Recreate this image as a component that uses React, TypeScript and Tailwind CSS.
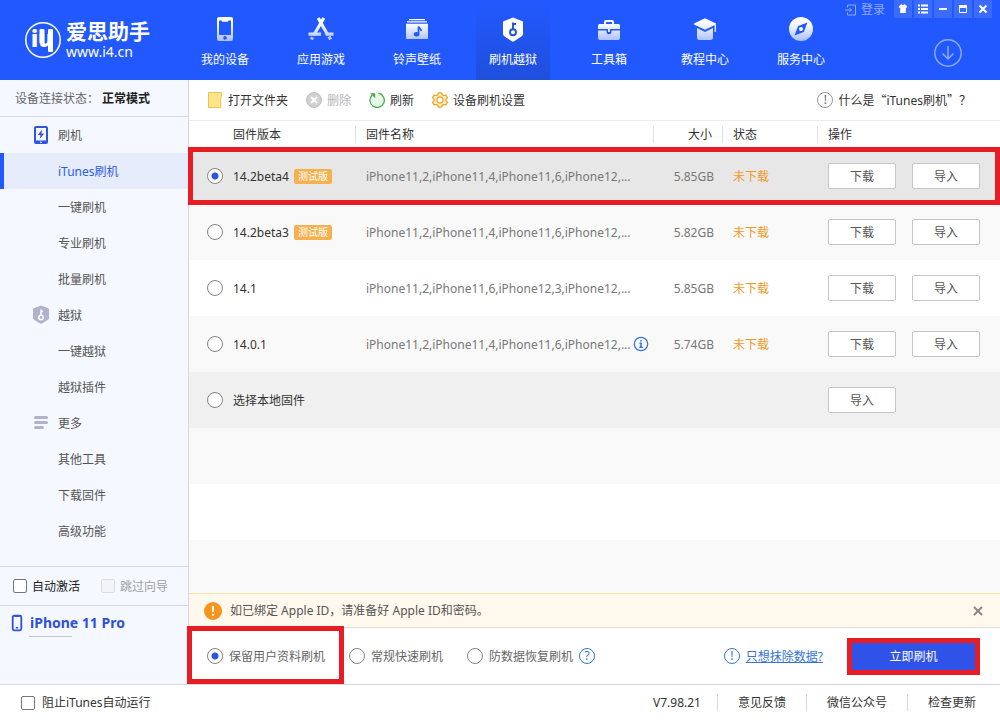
import React, { useState } from 'react';

interface NavItem {
  label: string;
  icon: React.ReactNode;
  active?: boolean;
}

interface Firmware {
  version: string;
  beta?: boolean;
  devices: string;
  info?: boolean;
  size: string;
}

const navItems: NavItem[] = [
  {
    label: '我的设备',
    icon: (
      <>
        <path
          fillRule="evenodd"
          d="M8 2h12a2 2 0 0 1 2 2v20a2 2 0 0 1-2 2H8a2 2 0 0 1-2-2V4a2 2 0 0 1 2-2zM8 5.5v14.5h12V5.500h-2.500l-.7 1.200h-5.600l-.7-1.200z"
        />
        <circle cx="14" cy="22.900" r="1.800" fill="#2259ff" />
      </>
    ),
  },
  {
    label: '应用游戏',
    icon: (
      <g fill="none" stroke="url(#navFade)" strokeWidth="3.200">
        <path d="M11.200 3l9.600 17M16.800 3L6.600 20.500" />
        <path d="M1.500 19.200h12.500M18.500 19.200h8" />
        <path d="M5.600 22.200l-1.200 2.200M22 21.600l1.600 3" />
      </g>
    ),
  },
  {
    label: '铃声壁纸',
    icon: (
      <>
        <path d="M6 4h16v1.200H6zM4 6.200h20v1.400H4zM3 8.800h22V24H3z" />
        <path
          d="M15.500 19V11.500c.6 2 3 2 2.600 4.600"
          fill="none"
          stroke="#2259ff"
          strokeWidth="1.700"
        />
        <ellipse cx="13.600" cy="19.300" rx="2.800" ry="2.200" fill="#2259ff" />
      </>
    ),
  },
  {
    label: '刷机越狱',
    active: true,
    icon: (
      <>
        <path
          fill="#fff"
          d="M14 2.600c.5 0 .9.2 1.300.4l7.600 3c.8.3 1.100.8 1.100 1.600v11c0 1.400-.5 2-1.600 2.800l-6.900 4.600c-1 .7-2 .7-3 0l-6.900-4.600C4.500 20.600 4 20 4 18.600v-11C4 6.800 4.300 6.300 5.100 6l7.600-3c.4-.2.8-.4 1.300-.4z"
        />
        <circle cx="14" cy="17.300" r="3" fill="none" stroke="#2052e0" strokeWidth="1.900" />
        <path d="M14 14.500V7.500M14 9h3" fill="none" stroke="#2052e0" strokeWidth="1.900" />
      </>
    ),
  },
  {
    label: '工具箱',
    icon: (
      <>
        <path
          fillRule="evenodd"
          d="M11 5h6a2 2 0 0 1 2 2v2h4.500A1.500 1.500 0 0 1 25 10.500V14H3v-3.500A1.500 1.500 0 0 1 4.500 9H9V7a2 2 0 0 1 2-2zm0 2v2h6V7z"
        />
        <path d="M3 15.500h8.500v1.300a2.500 2.500 0 0 0 5 0v-1.300H25V23a2 2 0 0 1-2 2H5a2 2 0 0 1-2-2z" />
        <path d="M13 14h2v3h-2z" />
      </>
    ),
  },
  {
    label: '教程中心',
    icon: (
      <>
        <path d="M14 3.300L25 8.600v1L14 14.800 3 9.600v-1z" />
        <path d="M6 13l8 4 8-4v9.500a2.500 2.500 0 0 1-2.500 2.500h-11A2.500 2.500 0 0 1 6 22.500z" />
        <path d="M23.600 10H25v7h-1.400z" />
      </>
    ),
  },
  {
    label: '服务中心',
    icon: (
      <>
        <circle cx="14" cy="14" r="12" />
        <path d="M20.500 7.500L16.800 17 7.500 20.500 11.200 11z" fill="#2259ff" />
        <circle cx="14" cy="14" r="2" fill="#fff" />
      </>
    ),
  },
];

const firmwares: Firmware[] = [
  { version: '14.2beta4', beta: true, devices: 'iPhone11,2,iPhone11,4,iPhone11,6,iPhone12,...', size: '5.85GB' },
  { version: '14.2beta3', beta: true, devices: 'iPhone11,2,iPhone11,4,iPhone11,6,iPhone12,...', size: '5.82GB' },
  { version: '14.1', devices: 'iPhone11,2,iPhone11,6,iPhone12,3,iPhone12,...', size: '5.85GB' },
  { version: '14.0.1', devices: 'iPhone11,2,iPhone11,4,iPhone11,6,iPhone12,...', info: true, size: '5.74GB' },
];

const flashModes = ['保留用户资料刷机', '常规快速刷机', '防数据恢复刷机'];

const radioClass =
  'size-4 shrink-0 appearance-none rounded-full border border-[#858585] bg-white checked:bg-[radial-gradient(circle,#2f55dc_3px,#ffffff_4px)]';

const checkClass =
  'size-3.5 shrink-0 appearance-none rounded-xs border border-[#777777] bg-white checked:bg-[#2f55dc] disabled:border-[#dcdcdc] disabled:bg-[#f3f4f6]';

const RoundMark: React.FC<{ mark: string; className: string }> = ({ mark, className }) => (
  <span
    className={`inline-flex size-4 shrink-0 items-center justify-center rounded-full border text-xs leading-none ${className}`}
  >
    {mark}
  </span>
);

const Header: React.FC = () => (
  <header className="flex h-20 bg-[#2259ff] text-white">
    <div className="flex w-[188px] shrink-0 items-center gap-1 pl-6">
      <svg viewBox="0 0 38 38" className="size-[38px]" aria-hidden="true">
        <circle cx="19" cy="19" r="17.2" fill="none" stroke="#fff" strokeWidth="1.500" />
        <text x="7" y="26" fill="#fff" fontFamily="Noto Sans" fontWeight="900" fontSize="22">
          iu
        </text>
        <rect x="15.500" y="8" width="5" height="14" rx="1" fill="#fff" />
        <rect x="24" y="8" width="5" height="23" rx="1" fill="#fff" />
      </svg>
      <div>
        <div className="font-['Liberation_Sans','Noto_Sans_CJK_SC',sans-serif] text-[21px] leading-6 font-bold">
          爱思助手
        </div>
        <div className="text-sm leading-4">www.i4.cn</div>
      </div>
    </div>

    <nav className="flex gap-[22px]">
      {navItems.map((item) => (
        <button
          key={item.label}
          className={`flex w-[74px] flex-col items-center gap-[9px] pt-[15px] text-xs leading-4 ${
            item.active ? 'bg-linear-to-b from-[#2259ff] to-[#204fdc]' : ''
          }`}
        >
          <svg viewBox="0 0 28 28" className="size-7" fill="url(#navFade)" aria-hidden="true">
            <defs>
              <linearGradient id="navFade" gradientUnits="userSpaceOnUse" x1="0" y1="8" x2="0" y2="26">
                <stop offset="0" stopColor="#fff" />
                <stop offset="1" stopColor="#a9beff" />
              </linearGradient>
            </defs>
            {item.icon}
          </svg>
          {item.label}
        </button>
      ))}
    </nav>

    <div className="ml-auto flex flex-col items-end pr-2">
      <div className="flex gap-0.5">
        <button className="mr-[7px] flex items-center gap-1 text-xs leading-[19px] text-[#8eabff]">
          <svg viewBox="0 0 12 12" className="size-3" fill="none" stroke="currentColor" aria-hidden="true">
            <path d="M2.500 3.500V1h8v10h-8V8.500M0 6h6.500M4.500 4l2 2-2 2" />
          </svg>
          登录
        </button>
        <WindowButton label="换肤">
          <path fill="#fff" d="M6 5l1.500-.8c.8 1 2.200 1 3 0L12 5l1.300 2-1.500 1.200V13H6.200V8.200L4.700 7z" />
        </WindowButton>
        <WindowButton label="菜单">
          <path stroke="#fff" strokeWidth="1.800" d="M4 5.500h2M7 5.500h7M4 9h2M7 9h7M4 12.500h2M7 12.500h7" />
        </WindowButton>
        <WindowButton label="最小化">
          <path stroke="#fff" strokeWidth="2" d="M5 9h8" />
        </WindowButton>
        <WindowButton label="最大化">
          <path stroke="#fff" fill="none" d="M5.500 6v6.500h7V6" />
          <path stroke="#fff" strokeWidth="3" d="M5 6.500h8" />
        </WindowButton>
        <WindowButton label="关闭">
          <path stroke="#fff" strokeWidth="2" d="M5.500 5.500l7 7M12.500 5.500l-7 7" />
        </WindowButton>
      </div>
      <button aria-label="下载管理" className="mt-5 mr-[30px] text-[#8eabff]">
        <svg viewBox="0 0 28 28" className="block size-7" fill="none" stroke="currentColor" strokeWidth="1.500">
          <circle cx="14" cy="14" r="13.200" />
          <path d="M14 7v13M8.500 14.500L14 20l5.500-5.500" />
        </svg>
      </button>
    </div>
  </header>
);

const WindowButton: React.FC<{ label: string; children: React.ReactNode }> = ({ label, children }) => (
  <button aria-label={label} className="size-[18px] bg-[#3b6cff]">
    <svg viewBox="0 0 18 18" className="block size-[18px]">
      {children}
    </svg>
  </button>
);

const SideGroup: React.FC<{ title: string; icon: React.ReactNode; items: string[]; active?: string }> = ({
  title,
  icon,
  items,
  active,
}) => (
  <>
    <div className="flex h-9 items-center gap-2 pl-8">
      <svg viewBox="0 0 18 20" className="h-5 w-[18px]" aria-hidden="true">
        {icon}
      </svg>
      {title}
    </div>
    {items.map((item) => (
      <button
        key={item}
        className={`flex h-9 w-full items-center border-l-4 pl-[54px] ${
          item === active ? 'border-[#2259ff] bg-[#e6ecfc] text-[#2f5be6]' : 'border-transparent'
        }`}
      >
        {item}
      </button>
    ))}
  </>
);

const Sidebar: React.FC = () => (
  <aside className="flex w-[189px] shrink-0 flex-col border-r border-[#d5d8e2] bg-[#f5f8ff]">
    <div className="flex h-[37px] items-center border-b border-[#d5d8e2] pl-[15px]">
      <span className="w-[87px] text-[#666666]">设备连接状态：</span>
      <span className="font-bold text-[#222222]">正常模式</span>
    </div>
    <nav className="flex-1 pb-[17px] text-[#555555]">
      <SideGroup
        title="刷机"
        active="iTunes刷机"
        items={['iTunes刷机', '一键刷机', '专业刷机', '批量刷机']}
        icon={
          <>
            <rect x="2" y="1" width="14" height="18" rx="2" fill="#2f55dc" />
            <rect x="4" y="3" width="10" height="12.500" fill="#f5f8ff" />
            <path d="M10 4.500L5.800 10h2.700L7.700 14 12.200 8.500H9.400z" fill="#2f55dc" />
            <path d="M8 16.700h2v1H8z" fill="#fff" />
          </>
        }
      />
      <SideGroup
        title="越狱"
        items={['一键越狱', '越狱插件']}
        icon={
          <>
            <path
              d="M9 .5l7.200 2.700c.5.2.8.5.8 1.100v8.500c0 1-.4 1.700-1.200 2.300L9 19l-6.800-3.900C1.400 14.500 1 13.800 1 12.800V4.300c0-.6.300-.9.800-1.100z"
              fill="#aeb4cb"
            />
            <circle cx="9" cy="12.500" r="2.200" fill="none" stroke="#fff" strokeWidth="1.500" />
            <path d="M9 10.500V4.500M9 6.500h2" stroke="#fff" strokeWidth="1.500" />
          </>
        }
      />
      <SideGroup
        title="更多"
        items={['其他工具', '下载固件', '高级功能']}
        icon={
          <path
            d="M3.500 4.500h11M3.500 9.500h11M3.500 14.500h7"
            stroke="#aeb4cb"
            strokeWidth="3"
            strokeLinecap="round"
          />
        }
      />
    </nav>
    <div className="flex h-10 items-center gap-[21px] border-y border-[#d5d8e2] pl-[13px]">
      <label className="flex items-center gap-[5px] text-[#222222]">
        <input type="checkbox" className={checkClass} />
        自动激活
      </label>
      <label className="flex items-center gap-[5px] text-[#a0a0a0]">
        <input type="checkbox" disabled className={checkClass} />
        跳过向导
      </label>
    </div>
    <div className="h-[78px] pt-1.5 pl-2.5">
      <div className="flex items-center gap-1.5 text-sm leading-[22px] font-bold text-[#2f50d8]">
        <svg viewBox="0 0 14 18" className="h-[18px] w-3.5" aria-hidden="true">
          <rect x="2.700" y="1.700" width="8.600" height="14.600" rx="1.500" fill="none" stroke="currentColor" strokeWidth="1.800" />
          <path d="M4.500 1.500h5v1.500h-5zM5.800 13h2.400v1.400H5.800z" fill="currentColor" />
        </svg>
        iPhone 11 Pro
      </div>
      <div className="mt-0.5 ml-[19px] h-px w-[43px] bg-[#c3c6d2]" />
    </div>
  </aside>
);

const Toolbar: React.FC = () => (
  <div className="flex h-[41px] items-center gap-[18px] border-b border-[#ececec] px-[18px] text-[#333333]">
    <button className="flex items-center gap-[5px]">
      <svg viewBox="0 0 16 16" className="size-4" aria-hidden="true">
        <path d="M1.500.5h13v4l-.7 1v10H1.500z" fill="#ffe48a" stroke="#e9c452" />
      </svg>
      打开文件夹
    </button>
    <button disabled className="flex items-center gap-[5px] text-[#b5b5b5]">
      <svg viewBox="0 0 16 16" className="size-4" aria-hidden="true">
        <circle cx="8" cy="8" r="7.400" fill="#d2d2d2" stroke="#b9b9b9" />
        <path d="M5 5l6 6M11 5l-6 6" stroke="#fff" strokeWidth="1.800" />
      </svg>
      删除
    </button>
    <button className="flex items-center gap-[5px]">
      <svg viewBox="0 0 16 16" className="size-4" aria-hidden="true">
        <circle cx="8" cy="8.500" r="7" fill="#e6f9e6" />
        <path d="M9.500 1.200A7.200 7.200 0 1 1 3 3.200" fill="none" stroke="#47ad4f" strokeWidth="1.300" />
        <path d="M1 1.200h5.200v5z" fill="#47ad4f" />
      </svg>
      刷新
    </button>
    <button className="flex items-center gap-[5px]">
      <svg viewBox="0 0 16 16" className="size-4" aria-hidden="true">
        <path
          d="M6.400.8h3.200l.6 2 1.400.8 2.200-.6 1.600 2.700L13.900 7.200v1.600l1.500 1.500-1.600 2.700-2.200-.6-1.400.8-.6 2H6.400l-.6-2-1.400-.8-2.200.6L.6 10.300l1.500-1.500V7.200L.6 5.700 2.200 3l2.200.6 1.400-.8z"
          fill="#fff0c4"
          stroke="#e8a83c"
          strokeWidth="1.300"
          strokeLinejoin="round"
        />
        <circle cx="8" cy="8" r="3" fill="#fff" stroke="#e8a83c" strokeWidth="1.300" />
      </svg>
      设备刷机设置
    </button>
    <a href="#help" className="ml-auto flex items-center gap-[5px] pr-[11px]">
      <RoundMark mark="!" className="border-[#999999] text-[#666666]" />
      <span>
        什么是<span className="font-['Noto_Sans_CJK_SC']">“</span>iTunes刷机
        <span className="font-['Noto_Sans_CJK_SC']">”</span>？
      </span>
    </a>
  </div>
);

const ActionButton: React.FC<{ children: React.ReactNode }> = ({ children }) => (
  <button className="h-[26px] w-[68px] rounded-xs border border-[#c6c6c6] bg-white text-[#555555]">{children}</button>
);

const FirmwareTable: React.FC = () => {
  const [selected, setSelected] = useState('14.2beta4');

  return (
    <table className="w-full table-fixed text-left">
      <colgroup>
        <col className="w-[166px]" />
        <col />
        <col className="w-[69px]" />
        <col className="w-[95px]" />
        <col className="w-[183px]" />
      </colgroup>
      <thead className="text-[#333333]">
        <tr className="h-[27px]">
          <th className="pl-11 font-normal">固件版本</th>
          <th className="font-normal">
            <div className="border-l border-[#e2e2e2] pl-2.5">固件名称</div>
          </th>
          <th className="text-right font-normal">
            <div className="border-l border-[#e2e2e2] pr-2.5">大小</div>
          </th>
          <th className="font-normal">
            <div className="border-l border-[#e2e2e2] pl-2.5">状态</div>
          </th>
          <th className="font-normal">
            <div className="border-l border-[#e2e2e2] pl-2.5">操作</div>
          </th>
        </tr>
      </thead>
      <tbody className="text-[#777777]">
        {firmwares.map((fw) => (
          <tr
            key={fw.version}
            className={`relative h-14 ${
              selected === fw.version ? 'z-10 bg-[#e7e7e7]' : 'odd:bg-white even:bg-[#f9f9f9]'
            }`}
          >
            <td className="pl-[18px]">
              <label className="flex items-center gap-2.5 text-[#333333]">
                <input
                  type="radio"
                  name="firmware"
                  className={radioClass}
                  checked={selected === fw.version}
                  onChange={() => setSelected(fw.version)}
                />
                <span className="flex items-center gap-[5px]">
                  {fw.version}
                  {fw.beta && (
                    <span className="rounded-xs bg-[#f6b04d] px-1 text-[10px] leading-[15px] text-white">测试版</span>
                  )}
                </span>
              </label>
              {/* red marker round the row to pick */}
              {fw.version === '14.2beta4' && (
                <span className="pointer-events-none absolute -inset-y-px right-0 -left-px border-5 border-[#e81c24]" />
              )}
            </td>
            <td className="pl-[11px] whitespace-nowrap">
              <span className="flex items-center gap-0.5">
                {fw.devices}
                {fw.info && (
                  <svg viewBox="0 0 16 16" className="size-4" fill="none" stroke="#3573d6" aria-label="详情">
                    <circle cx="8" cy="8" r="6.700" strokeWidth="1.200" />
                    <path d="M8 4v1.600M6.500 7.200H8V11M6.300 11.300h3.500" strokeWidth="1.500" />
                  </svg>
                )}
              </span>
            </td>
            <td className="pr-2 text-right">{fw.size}</td>
            <td className="pl-[11px] text-[#f09a1e]">未下载</td>
            <td className="pl-[11px]">
              <div className="flex gap-4">
                <ActionButton>下载</ActionButton>
                <ActionButton>导入</ActionButton>
              </div>
            </td>
          </tr>
        ))}
        <tr className="h-14 bg-[#f0f0f0]">
          <td colSpan={4} className="pl-[18px]">
            <label className="flex items-center gap-2.5 text-[#333333]">
              <input
                type="radio"
                name="firmware"
                className={radioClass}
                checked={selected === 'local'}
                onChange={() => setSelected('local')}
              />
              选择本地固件
            </label>
          </td>
          <td className="pl-[11px]">
            <ActionButton>导入</ActionButton>
          </td>
        </tr>
      </tbody>
    </table>
  );
};

const FlashBar: React.FC = () => {
  const [mode, setMode] = useState(flashModes[0]);

  return (
    <div className="flex h-14 items-center gap-6 pr-5 pl-[18px] text-[#666666]">
      {flashModes.map((name, i) => (
        <div key={name} className="relative flex h-full items-center gap-1.5">
          <label className="flex items-center gap-1.5">
            <input
              type="radio"
              name="mode"
              className={radioClass}
              checked={mode === name}
              onChange={() => setMode(name)}
            />
            {name}
          </label>
          {i === 0 && (
            <span className="pointer-events-none absolute -top-0.5 -right-[19px] bottom-0 -left-5 border-5 border-[#e81c24]" />
          )}
          {i === 2 && <RoundMark mark="?" className="border-[#3573d6] text-[#3573d6]" />}
        </div>
      ))}
      <a href="#erase" className="ml-auto flex items-center gap-1.5 text-[#3573d6]">
        <RoundMark mark="!" className="border-[#3573d6]" />
        <span className="underline">只想抹除数据?</span>
      </a>
      <button className="h-[37px] w-[133px] border-5 border-[#e81c24] bg-[#2f52e8] text-white">立即刷机</button>
    </div>
  );
};

const Footer: React.FC = () => (
  <footer className="flex h-9 items-center border-t border-[#d5d8e2] bg-white pr-1 pl-[21px] text-[#333333]">
    <label className="mr-auto flex items-center gap-[7px]">
      <input type="checkbox" className={checkClass} />
      阻止iTunes自动运行
    </label>
    <span className="pr-4">V7.98.21</span>
    <button className="border-l border-[#d9d9d9] px-5">意见反馈</button>
    <button className="border-l border-[#d9d9d9] px-5">微信公众号</button>
    <button className="border-l border-[#d9d9d9] px-5">检查更新</button>
  </footer>
);

export default function App() {
  return (
    <div className="flex min-h-screen flex-col bg-white font-['Noto_Sans','Noto_Sans_CJK_SC',sans-serif] text-xs leading-[17px]">
      <Header />
      <div className="flex flex-1">
        <Sidebar />
        <main className="flex min-w-0 flex-1 flex-col">
          <Toolbar />
          <FirmwareTable />
          <div className="flex flex-1 flex-col">
            <div className="h-14 bg-[#f9f9f9]" />
            <div className="h-14" />
            <div className="flex-1 bg-[#f9f9f9]" />
          </div>
          <div className="flex h-[35px] items-center gap-2 border-t border-b border-t-[#f3e3a0] border-b-[#dcdcdc] bg-[#fff8ec] pr-4 pl-[15px] text-[#555555]">
            <svg viewBox="0 0 18 18" className="size-[18px]" aria-hidden="true">
              <circle cx="9" cy="9" r="9" fill="#f7941d" />
              <path d="M9 4v6M9 11.800v2" stroke="#fff" strokeWidth="2" />
            </svg>
            <span>如已绑定 Apple ID，请准备好 Apple ID和密码。</span>
            <button aria-label="关闭提示" className="ml-auto">
              <svg viewBox="0 0 12 12" className="block size-3" stroke="#888888" strokeWidth="2">
                <path d="M2 2l8 8M10 2l-8 8" />
              </svg>
            </button>
          </div>
          <FlashBar />
        </main>
      </div>
      <Footer />
    </div>
  );
}
